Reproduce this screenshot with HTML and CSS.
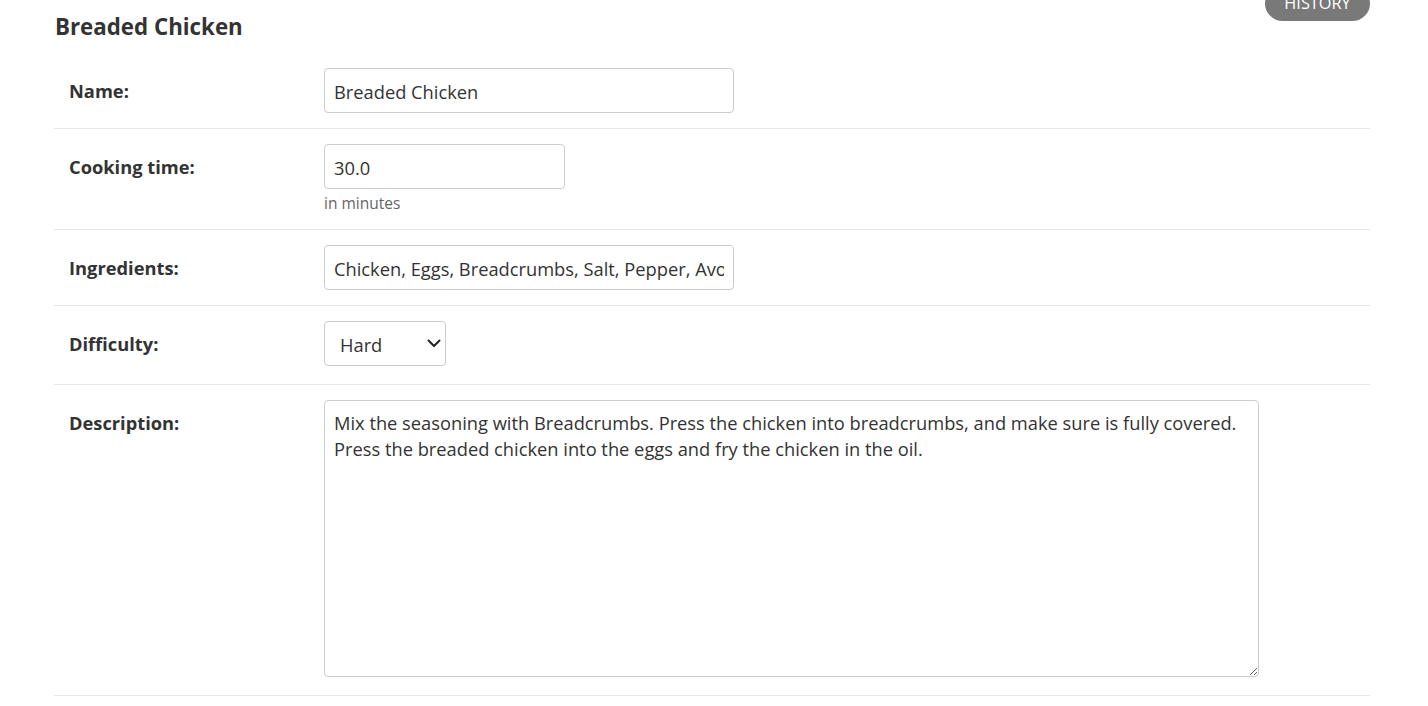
FILE: index.html
```html
<!DOCTYPE html>
<html lang="en">
<head>
<meta charset="utf-8">
<title>Change recipe | Breaded Chicken</title>
<link rel="stylesheet" href="styles.css">
</head>
<body>
<div class="content">
  <div class="header">
    <h2 class="title">Breaded Chicken</h2>
    <a class="history" href="#">History</a>
  </div>
  <form class="form">
    <div class="row">
      <label class="label" for="id_name">Name:</label>
      <div class="field">
        <input class="input input-name" id="id_name" type="text" value="Breaded Chicken">
      </div>
    </div>
    <div class="row">
      <label class="label" for="id_time">Cooking time:</label>
      <div class="field">
        <input class="input input-time" id="id_time" type="text" value="30.0">
        <div class="help">in minutes</div>
      </div>
    </div>
    <div class="row">
      <label class="label" for="id_ing">Ingredients:</label>
      <div class="field">
        <input class="input input-name" id="id_ing" type="text" value="Chicken, Eggs, Breadcrumbs, Salt, Pepper, Avocado oil">
      </div>
    </div>
    <div class="row row-gap">
      <label class="label" for="id_diff">Difficulty:</label>
      <div class="field">
        <div class="select-wrap">
          <select class="select" id="id_diff">
            <option>Easy</option>
            <option>Medium</option>
            <option selected>Hard</option>
          </select>
          <svg class="chevron" width="14" height="9" viewBox="0 0 14 9"><path d="M1.5 1.5 L7 7 L12.5 1.5" fill="none" stroke="#222" stroke-width="2" stroke-linecap="round" stroke-linejoin="round"/></svg>
        </div>
      </div>
    </div>
    <div class="row row-gap">
      <label class="label" for="id_desc">Description:</label>
      <div class="field">
        <textarea class="textarea" id="id_desc">Mix the seasoning with Breadcrumbs. Press the chicken into breadcrumbs, and make sure is fully covered. Press the breaded chicken into the eggs and fry the chicken in the oil.</textarea>
      </div>
    </div>
  </form>
</div>
</body>
</html>
```
FILE: styles.css
```css
html, body {
  margin: 0;
  padding: 0;
  background: #fff;
}
body {
  font-family: "Open Sans", "Noto Sans", sans-serif;
  color: #333;
  overflow: hidden;
}
.content {
  padding: 0 58px 0 54px;
}
.header {
  display: flex;
  justify-content: space-between;
  align-items: flex-start;
  height: 53px;
}
.title {
  margin: 12px 0 0 1px;
  font-size: 22.3px;
  font-weight: 700;
  line-height: 30px;
  color: #333;
}
.history {
  display: block;
  margin-top: -14px;
  width: 105px;
  height: 35px;
  box-sizing: border-box;
  padding-top: 6px;
  border-radius: 18px;
  background: #797979;
  color: #fff;
  text-decoration: none;
  text-transform: uppercase;
  font-size: 16.3px;
  line-height: 22px;
  text-align: center;
}
.row {
  display: flex;
  padding: 15px 15px;
  border-bottom: 1px solid #e8e8e8;
}
.row-gap {
  padding-bottom: 18px;
}
.label {
  flex: 0 0 255px;
  font-size: 18.3px;
  font-weight: 700;
  line-height: 28px;
  padding-top: 9px;
  color: #333;
}
.field {
  display: flex;
  flex-direction: column;
  align-items: flex-start;
}
.input {
  box-sizing: border-box;
  height: 45px;
  border: 1px solid #ccc;
  border-radius: 4px;
  padding: 1px 9px 0;
  font-family: inherit;
  font-size: 18.3px;
  color: #333;
  background: #fff;
  outline: none;
}
.input-name {
  width: 410px;
}
.input-time {
  width: 241px;
}
.help {
  margin-top: 4px;
  font-size: 15.5px;
  line-height: 21px;
  color: #666;
}
.select-wrap {
  position: relative;
  width: 122px;
  height: 45px;
}
.select {
  appearance: none;
  -webkit-appearance: none;
  box-sizing: border-box;
  width: 122px;
  height: 45px;
  border: 1px solid #ccc;
  border-radius: 4px;
  padding: 1px 15px 0;
  font-family: inherit;
  font-size: 18.3px;
  color: #333;
  background: #fff;
  outline: none;
}
.chevron {
  position: absolute;
  right: 5px;
  top: 18px;
  pointer-events: none;
}
.textarea {
  display: block;
  box-sizing: border-box;
  width: 935px;
  height: 277px;
  border: 1px solid #ccc;
  border-radius: 4px;
  padding: 9px 9px 8px;
  font-family: inherit;
  font-size: 18.3px;
  line-height: 26px;
  color: #333;
  background: #fff;
  outline: none;
  resize: both;
}
```
